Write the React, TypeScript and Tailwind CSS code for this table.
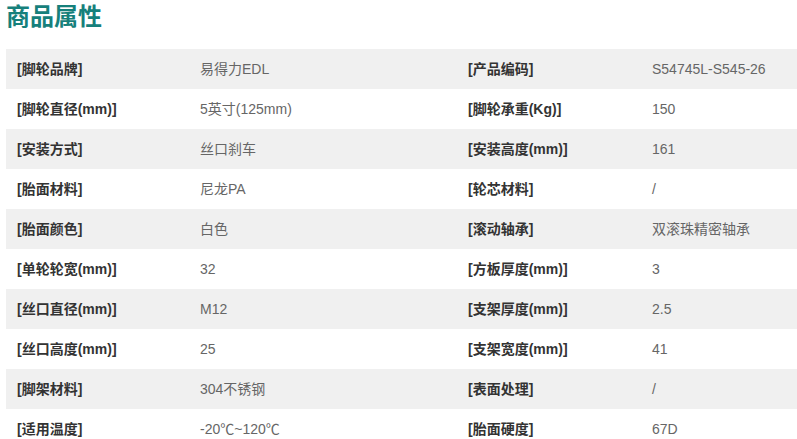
import React from "react";

const rows: [string, string, string, string][] = [
  ["[脚轮品牌]", "易得力EDL", "[产品编码]", "S54745L-S545-26"],
  ["[脚轮直径(mm)]", "5英寸(125mm)", "[脚轮承重(Kg)]", "150"],
  ["[安装方式]", "丝口刹车", "[安装高度(mm)]", "161"],
  ["[胎面材料]", "尼龙PA", "[轮芯材料]", "/"],
  ["[胎面颜色]", "白色", "[滚动轴承]", "双滚珠精密轴承"],
  ["[单轮轮宽(mm)]", "32", "[方板厚度(mm)]", "3"],
  ["[丝口直径(mm)]", "M12", "[支架厚度(mm)]", "2.5"],
  ["[丝口高度(mm)]", "25", "[支架宽度(mm)]", "41"],
  ["[脚架材料]", "304不锈钢", "[表面处理]", "/"],
  ["[适用温度]", "-20℃~120℃", "[胎面硬度]", "67D"],
];

export default function App() {
  return (
    <div
      className="w-[797px] h-[439px] overflow-hidden bg-white"
      style={{ fontFamily: '"Liberation Sans", Arial, "Noto Sans CJK SC", sans-serif' }}
    >
      <div className="pl-[6px] h-[49px] pt-[1px]">
        <h1 className="text-[24px] leading-[32px] font-bold text-[#16807b]">商品属性</h1>
      </div>
      <div className="ml-[6px]">
        {rows.map((r, i) => (
          <div
            key={i}
            className={`grid grid-cols-[183px_268px_184px_1fr] h-[40px] items-center text-[14px] ${
              i % 2 === 0 ? "bg-[#f0f0f0]" : "bg-white"
            }`}
          >
            <div className="pl-[11px] font-bold text-[#333333]">{r[0]}</div>
            <div className="pl-[11px] text-[#666666]">{r[1]}</div>
            <div className="pl-[11px] font-bold text-[#333333]">{r[2]}</div>
            <div className="pl-[11px] text-[#666666]">{r[3]}</div>
          </div>
        ))}
      </div>
    </div>
  );
}
